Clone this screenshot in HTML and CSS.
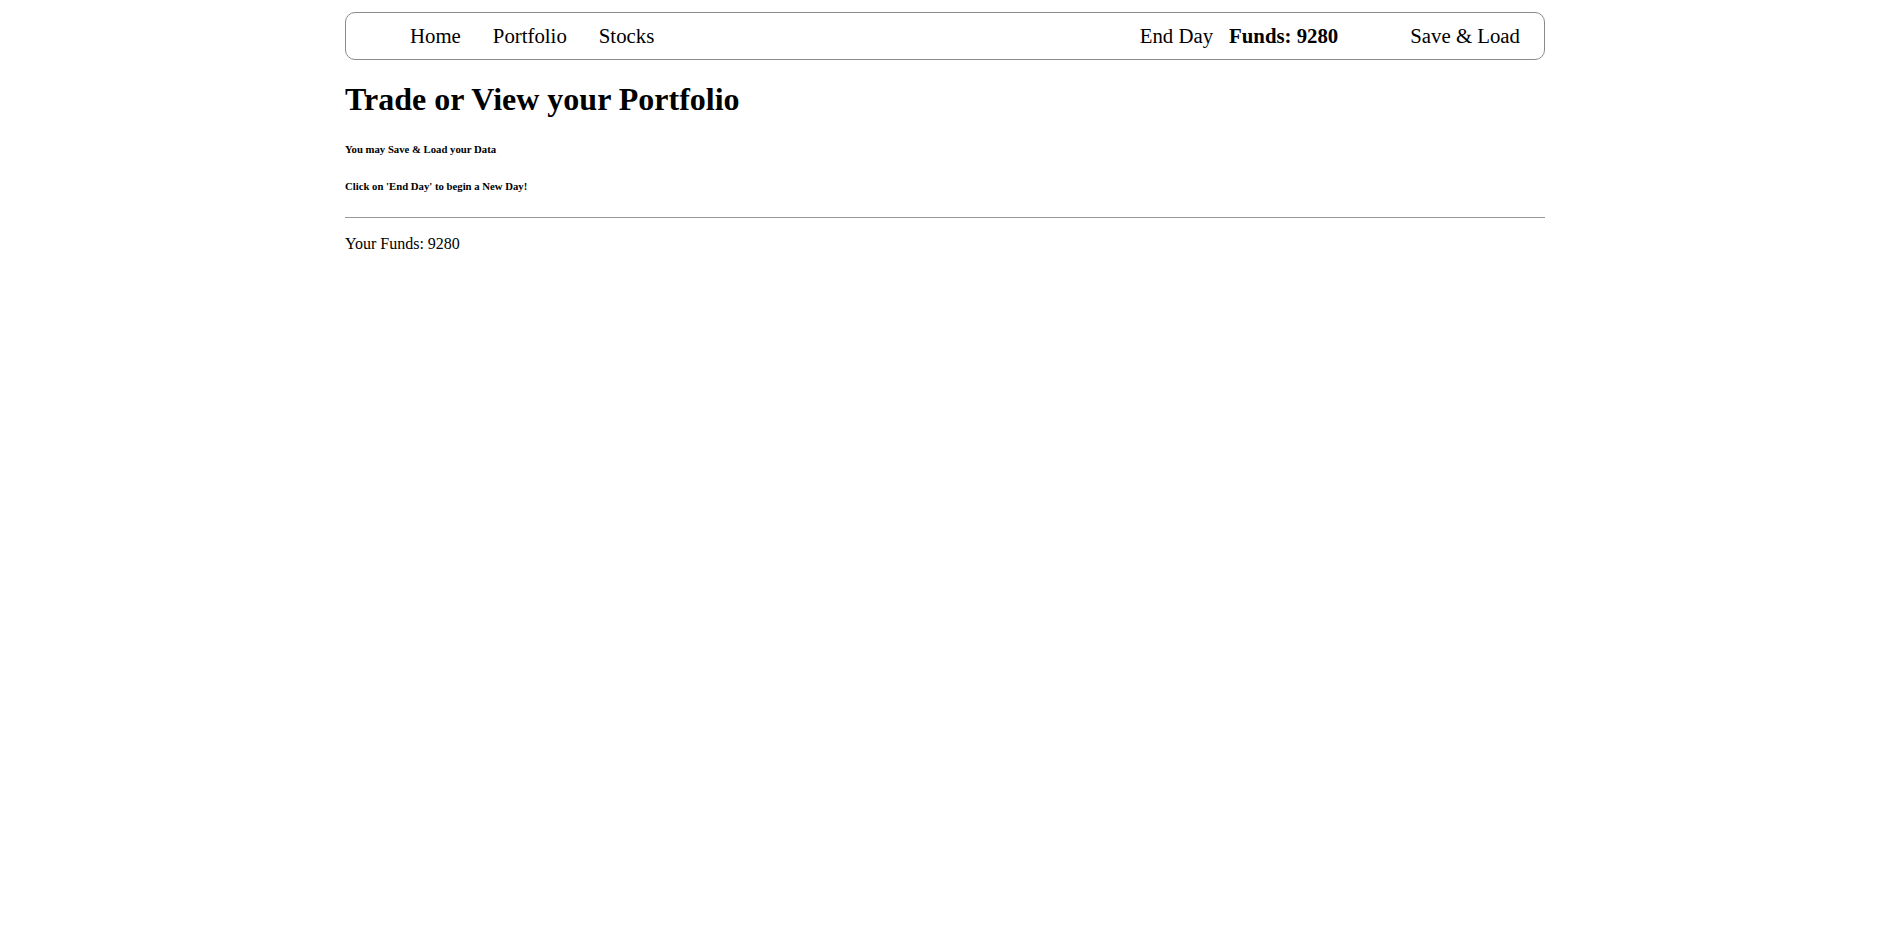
FILE: index.html
```html
<!DOCTYPE html>
<html lang="en">
<head>
<meta charset="utf-8">
<title>Stock Trader</title>
<link rel="stylesheet" href="styles.css">
</head>
<body>
<div class="container">
  <nav class="navbar">
    <ul class="nav-left">
      <li class="nav-item">Home</li>
      <li class="nav-item">Portfolio</li>
      <li class="nav-item">Stocks</li>
    </ul>
    <ul class="nav-right">
      <li class="nav-item">End Day</li>
      <li class="nav-item funds">Funds: 9280</li>
      <li class="nav-item save">Save &amp; Load</li>
    </ul>
  </nav>
  <h1 class="title">Trade or View your Portfolio</h1>
  <h6 class="note">You may Save &amp; Load your Data</h6>
  <h6 class="note">Click on 'End Day' to begin a New Day!</h6>
  <hr class="divider">
  <p class="funds-text">Your Funds: 9280</p>
</div>
</body>
</html>
```
FILE: styles.css
```css
html, body {
  margin: 0;
  padding: 0;
  background: #fff;
  color: #000;
  font-family: "Liberation Serif", "Times New Roman", serif;
}
.container {
  width: 1200px;
  margin: 0 auto;
  padding-top: 12px;
}
.navbar {
  display: flex;
  justify-content: space-between;
  align-items: center;
  height: 48px;
  box-sizing: border-box;
  border: 1px solid #8a8a8a;
  border-radius: 10px;
  padding: 0 24px 0 64px;
}
.nav-left, .nav-right {
  display: flex;
  align-items: center;
  list-style: none;
  margin: 0;
  padding: 0;
}
.nav-item {
  font-size: 20.8px;
}
.nav-left .nav-item + .nav-item {
  margin-left: 32px;
}
.funds {
  font-weight: bold;
  margin-left: 16px;
}
.save {
  margin-left: 72px;
}
.title {
  font-size: 32px;
  font-weight: bold;
  margin: 21px 0 0 0;
}
.note {
  font-size: 10.72px;
  font-weight: bold;
  margin: 25px 0 0 0;
}
.divider {
  border: 0;
  border-top: 1px solid #999;
  margin: 25px 0 0 0;
}
.funds-text {
  font-size: 16px;
  margin: 17px 0 0 0;
}
```
